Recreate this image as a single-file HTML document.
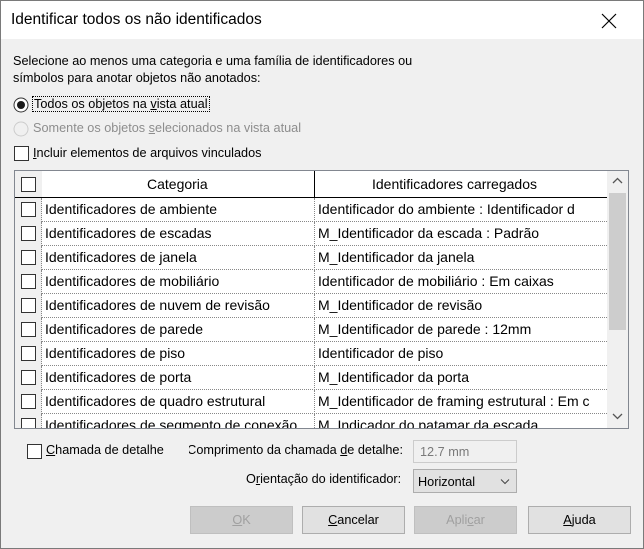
<!DOCTYPE html>
<html><head><meta charset="utf-8"><style>
*{box-sizing:border-box;margin:0;padding:0}
body{width:644px;height:549px;overflow:hidden;background:#f0f0f0;font-family:"Liberation Sans",sans-serif;font-size:12.7px;color:#000;position:relative}
.win{position:absolute;left:0;top:0;width:644px;height:549px;border:1px solid #7a7a7a;background:#f0f0f0}
.title{position:absolute;left:0;top:0;width:642px;height:38px;background:#fff}
.title span{position:absolute;left:10px;top:10px;font-size:15.5px}
.close{position:absolute;left:598px;top:10px;width:20px;height:20px}
.a{position:absolute;white-space:nowrap}
.cb{position:absolute;width:15px;height:15px;border:1px solid #333;background:#fff}
.grid{position:absolute;left:13px;top:169px;width:615px;height:259px;border:1px solid #828790;background:#fff;overflow:hidden}
.row{position:absolute;left:0;width:592px;height:24px;border-bottom:1px dotted #888;font-size:14px}
.row .c0{position:absolute;left:0;top:0;width:27px;height:24px;background:#f0f0f0;border-right:1px dotted #888}
.row .c1{position:absolute;left:30px;top:3px;width:268px;overflow:hidden;white-space:nowrap}
.row .c2{position:absolute;left:299px;top:0;height:24px;border-left:1px dotted #888;padding:3px 0 0 3px;width:293px;overflow:hidden;white-space:nowrap}
.row .cb{left:6px;top:4px}
.hdr{position:absolute;left:0;top:0;width:592px;height:27px;background:#fff;border-bottom:1px solid #000;font-size:14px}
.btn{position:absolute;top:505px;height:28px;border:1px solid #adadad;background:#e1e1e1;text-align:center;line-height:26px;font-size:12.7px}
.dis{color:#a0a0a0;background:#cccccc;border-color:#bfbfbf}
</style></head><body><div class="win">
<div class="title"><span>Identificar todos os não identificados</span>
<svg class="close" viewBox="0 0 20 20"><path d="M3 3L17 17M17 3L3 17" stroke="#000" stroke-width="1.2"/></svg></div>
<div class="a" style="left:12px;top:52px;line-height:17px">Selecione ao menos uma categoria e uma família de identificadores ou<br>símbolos para anotar objetos não anotados:</div>
<svg style="position:absolute;left:12px;top:96px" width="16" height="16"><circle cx="8" cy="8" r="7" fill="#fff" stroke="#333"/><circle cx="8" cy="8" r="4" fill="#1a1a1a"/></svg>
<div class="a" style="left:31px;top:95px;border:1px dotted #000;padding:0 1px">Todos os objetos na <u>v</u>ista atual</div>
<svg style="position:absolute;left:12px;top:120px" width="16" height="16"><circle cx="8" cy="8" r="7" fill="#f0f0f0" stroke="#ccc"/></svg>
<div class="a" style="left:32px;top:120px;color:#8d8d8d">Somente os objetos <u>s</u>elecionados na vista atual</div>
<div class="cb" style="left:13px;top:145px"></div>
<div class="a" style="left:32px;top:145px"><u>I</u>ncluir elementos de arquivos vinculados</div>
<div class="grid">
<div class="hdr"><div style="position:absolute;left:0;top:0;width:27px;height:26px;background:#f0f0f0"></div><div class="cb" style="left:6px;top:6px"></div>
<div class="a" style="left:132px;top:5px">Categoria</div>
<div style="position:absolute;left:299px;top:0;width:1px;height:26px;background:#000"></div>
<div class="a" style="left:357px;top:5px">Identificadores carregados</div></div>
<div class="row" style="top:27px"><div class="c0"></div><div class="cb"></div><div class="c1">Identificadores de ambiente</div><div class="c2">Identificador do ambiente : Identificador d</div></div>
<div class="row" style="top:51px"><div class="c0"></div><div class="cb"></div><div class="c1">Identificadores de escadas</div><div class="c2">M_Identificador da escada : Padrão</div></div>
<div class="row" style="top:75px"><div class="c0"></div><div class="cb"></div><div class="c1">Identificadores de janela</div><div class="c2">M_Identificador da janela</div></div>
<div class="row" style="top:99px"><div class="c0"></div><div class="cb"></div><div class="c1">Identificadores de mobiliário</div><div class="c2">Identificador de mobiliário : Em caixas</div></div>
<div class="row" style="top:123px"><div class="c0"></div><div class="cb"></div><div class="c1">Identificadores de nuvem de revisão</div><div class="c2">M_Identificador de revisão</div></div>
<div class="row" style="top:147px"><div class="c0"></div><div class="cb"></div><div class="c1">Identificadores de parede</div><div class="c2">M_Identificador de parede : 12mm</div></div>
<div class="row" style="top:171px"><div class="c0"></div><div class="cb"></div><div class="c1">Identificadores de piso</div><div class="c2">Identificador de piso</div></div>
<div class="row" style="top:195px"><div class="c0"></div><div class="cb"></div><div class="c1">Identificadores de porta</div><div class="c2">M_Identificador da porta</div></div>
<div class="row" style="top:219px"><div class="c0"></div><div class="cb"></div><div class="c1">Identificadores de quadro estrutural</div><div class="c2">M_Identificador de framing estrutural : Em c</div></div>
<div class="row" style="top:243px"><div class="c0"></div><div class="cb"></div><div class="c1">Identificadores de segmento de conexão</div><div class="c2">M_Indicador do patamar da escada</div></div>
<div style="position:absolute;left:592px;top:0;width:21px;height:257px;background:#f0f0f0">
<svg style="position:absolute;left:5px;top:6px" width="11" height="8"><path d="M1 6L5.5 1.5L10 6" stroke="#555" fill="none" stroke-width="1.3"/></svg>
<div style="position:absolute;left:2px;top:22px;width:17px;height:137px;background:#cdcdcd"></div>
<svg style="position:absolute;left:5px;top:241px" width="11" height="8"><path d="M1 2L5.5 6.5L10 2" stroke="#555" fill="none" stroke-width="1.3"/></svg>
</div></div>
<div class="cb" style="left:26px;top:443px"></div>
<div class="a" style="left:45px;top:442px"><u>C</u>hamada de detalhe</div>
<div style="position:absolute;left:188px;top:442px;width:214px;height:18px;overflow:hidden"><span class="a" style="right:0;top:0">Comprimento da chamada <u>d</u>e detalhe:</span></div>
<div style="position:absolute;left:412px;top:439px;width:104px;height:23px;border:1px solid #ccc;background:#f0f0f0;color:#7a7a7a;padding:4px 0 0 6px">12.7 mm</div>
<div class="a" style="left:245px;top:471px">O<u>r</u>ientação do identificador:</div>
<div style="position:absolute;left:412px;top:468px;width:104px;height:24px;border:1px solid #adadad;background:#e1e1e1;padding:5px 0 0 4px">Horizontal
<svg style="position:absolute;left:86px;top:8px" width="10" height="7"><path d="M1 1.5L5 5.5L9 1.5" stroke="#444" fill="none"/></svg></div>
<div class="btn dis" style="left:189px;width:103px"><u>O</u>K</div>
<div class="btn" style="left:301px;width:103px"><u>C</u>ancelar</div>
<div class="btn dis" style="left:413px;width:103px">Apli<u>c</u>ar</div>
<div class="btn" style="left:527px;width:103px"><u>A</u>juda</div>
</div></body></html>
